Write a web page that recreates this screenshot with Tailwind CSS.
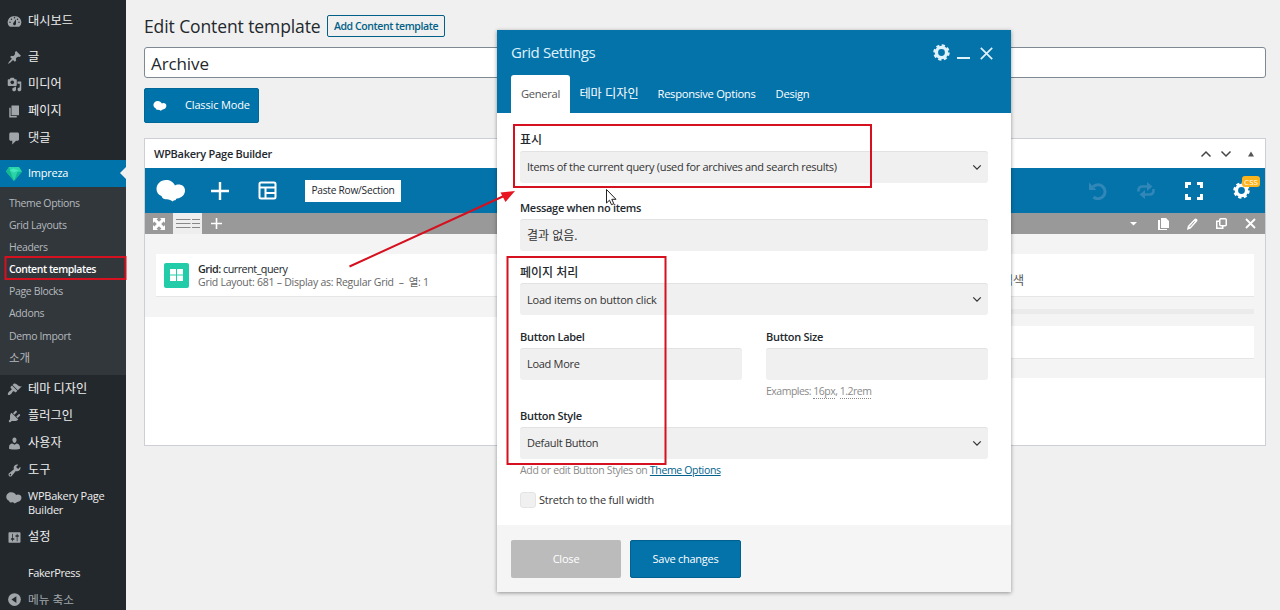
<!DOCTYPE html>
<html lang="ko">
<head>
    <meta charset="UTF-8">
    <meta name="viewport" content="width=device-width, initial-scale=1.0">
    <title>Edit Content template</title>
    <script src="https://cdn.jsdelivr.net/npm/@tailwindcss/browser@4"></script>
</head>
<body class="relative flex w-[1280px] h-[610px] overflow-hidden bg-[#f0f0f0] text-[#23282d] text-[11px] font-['Open_Sans','Noto_Sans_CJK_KR',sans-serif]">
    <!-- Shared icons -->
    <svg class="hidden">
        <symbol id="bakery" viewBox="0 0 30 22"><path d="M10 0C4.500 0 .5 4 .5 9c0 3.500 2.200 6 5 7 .8 3 3 3.500 5.500 3.200 2 .3 4 .8 5.500 2.300.8-.8 1.600-1.400 3.500-1.500-.5-1 .2-1.400 1-1.500C26 18 29 14.500 29 10.500 29 6.500 26 4.500 22.500 4.500c-1.500 0-2.600.4-3.500 1C17.500 2 14 0 10 0z"/></symbol>
        <symbol id="gear" viewBox="0 0 20 20"><circle cx="10" cy="10" r="6" fill="none" stroke="currentColor" stroke-width="4"/><circle cx="10" cy="10" r="8.400" fill="none" stroke="currentColor" stroke-width="2.600" stroke-dasharray="3.800 2.797"/></symbol>
        <symbol id="chevron" viewBox="0 0 12 8"><path d="M1.500 1.500 6 6l4.500-4.500" fill="none" stroke="currentColor" stroke-width="1.500"/></symbol>
    </svg>

    <!-- Admin menu -->
    <nav class="w-[126px] shrink-0 bg-[#23282d] text-[#eee] text-[12.2px] pt-[7px]">
        <a class="flex items-center h-[27px] pt-0.5 pl-[7px] mb-[9px]">
            <svg class="w-[15px] h-[15px] mr-1.5 fill-[#a0a5aa]" viewBox="0 0 20 20"><path d="M3.760 17h12.480A7.998 7.998 0 0 0 10 3a8 8 0 0 0-6.240 14zM10 4c.55 0 1 .45 1 1s-.45 1-1 1-1-.45-1-1 .45-1 1-1zM6 6c.55 0 1 .45 1 1s-.45 1-1 1-1-.45-1-1 .45-1 1-1zm8 0c.55 0 1 .45 1 1s-.45 1-1 1-1-.45-1-1 .45-1 1-1zm-5.370 5.550L12 7v6c0 1.100-.9 2-2 2s-2-.9-2-2c0-.57.24-1.080.63-1.450zM4 10c.55 0 1 .45 1 1s-.45 1-1 1-1-.45-1-1 .45-1 1-1zm12 0c.55 0 1 .45 1 1s-.45 1-1 1-1-.45-1-1 .45-1 1-1z"/></svg>
            대시보드
        </a>
        <a class="flex items-center h-[27px] pt-0.5 pl-[7px]">
            <svg class="w-[15px] h-[15px] mr-1.5 fill-[#a0a5aa]" viewBox="0 0 20 20"><path d="M10.440 3.020l1.820-1.820 6.360 6.350-1.830 1.820c-1.050-.68-2.480-.57-3.410.36l-.75.75c-.92.93-1.040 2.350-.35 3.410l-1.830 1.820-2.410-2.410-2.800 2.790c-.42.42-3.380 2.710-3.800 2.290s1.860-3.390 2.280-3.810l2.790-2.790L4.100 9.360l1.830-1.820c1.050.69 2.480.57 3.400-.36l.75-.75c.93-.92 1.050-2.350.36-3.410z"/></svg>
            글
        </a>
        <a class="flex items-center h-[27px] pt-0.5 pl-[7px]">
            <svg class="w-[15px] h-[15px] mr-1.5 fill-[#a0a5aa]" viewBox="0 0 20 20"><path d="M13 11V4c0-.55-.45-1-1-1h-1.670L9 1H5L3.670 3H2c-.55 0-1 .45-1 1v7c0 .55.45 1 1 1h10c.55 0 1-.45 1-1zM7 4.500c1.380 0 2.500 1.120 2.500 2.500S8.380 9.500 7 9.500 4.500 8.380 4.500 7 5.620 4.500 7 4.500zM14 6h5v10.500c0 1.380-1.120 2.500-2.500 2.500S14 17.880 14 16.500s1.120-2.500 2.500-2.500c.17 0 .34.02.5.05V9h-3V6zm-4 8.050V13h2v3.500c0 1.380-1.120 2.500-2.500 2.500S7 17.880 7 16.500 8.120 14 9.500 14c.17 0 .34.02.5.05z"/></svg>
            미디어
        </a>
        <a class="flex items-center h-[27px] pt-0.5 pl-[7px]">
            <svg class="w-[15px] h-[15px] mr-1.5 fill-[#a0a5aa]" viewBox="0 0 20 20"><path d="M6 15V2h10v13H6zm-1 1h8v2H3V5h2v11z"/></svg>
            페이지
        </a>
        <a class="flex items-center h-[27px] pt-0.5 pl-[7px] mb-[9px]">
            <svg class="w-[15px] h-[15px] mr-1.5 fill-[#a0a5aa]" viewBox="0 0 20 20"><path d="M5 2h9c1.100 0 2 .9 2 2v7c0 1.100-.9 2-2 2h-2l-5 5v-5H5c-1.100 0-2-.9-2-2V4c0-1.100.9-2 2-2z"/></svg>
            댓글
        </a>
        <a class="relative flex items-center h-[27px] pl-[6px] bg-[#0073aa] text-white text-[11px] tracking-[-0.25px]">
            <svg class="w-4 h-[15px] mr-1.5" viewBox="0 0 16 15"><path d="M3 1h10l3 4.500L8 15 0 5.500z" fill="#2bd4a8"/><path d="M0 5.500 8 15l-3.500-9L3 1z" fill="#13b98f"/><path d="M16 5.500 8 15l3.500-9z" fill="#0fb594"/><path d="m3.500 4.500 4-2 5 2-4.500 2z" fill="#45e6bd"/></svg>
            Impreza
            <span class="absolute right-0 top-[7px] border-y-[6px] border-r-[6px] border-y-transparent border-r-[#f0f0f0]"></span>
        </a>
        <div class="h-[188px] pt-[5px] pl-[9px] bg-[#32373c] text-[#b4b9be] text-[10.5px] leading-[22.1px] tracking-[-0.35px]">
            <p>Theme Options</p>
            <p>Grid Layouts</p>
            <p>Headers</p>
            <p class="font-semibold text-white tracking-[-0.45px]">Content templates</p>
            <p>Page Blocks</p>
            <p>Addons</p>
            <p>Demo Import</p>
            <p class="text-[11.5px] tracking-normal">소개</p>
        </div>
        <a class="flex items-center h-[27px] pt-0.5 pl-[7px]">
            <svg class="w-[15px] h-[15px] mr-1.5 fill-[#a0a5aa]" viewBox="0 0 20 20"><path d="M14.480 11.060L7.410 3.990l1.500-1.500c.5-.56 2.300-.47 3.510.32 1.210.8 1.430 1.280 2.910 2.100 1.180.64 2.450 1.260 4.450.85zm-.71.71L6.700 4.700 4.930 6.470c-.39.39-.39 1.020 0 1.410l1.060 1.060c.39.39.39 1.030 0 1.420-.6.6-1.430 1.110-2.210 1.690-.35.26-.7.53-1.010.84C1.430 14.230.4 16.080 1.400 17.070c.99 1 2.840-.03 4.180-1.360.31-.31.58-.66.85-1.020.57-.78 1.080-1.610 1.690-2.210.39-.39 1.020-.39 1.410 0l1.060 1.060c.39.39 1.020.39 1.410 0z"/></svg>
            테마 디자인
        </a>
        <a class="flex items-center h-[27px] pt-0.5 pl-[7px]">
            <svg class="w-[15px] h-[15px] mr-1.5 fill-[#a0a5aa]" viewBox="0 0 20 20"><path d="M13.110 4.360L9.870 7.600 8 5.730l3.240-3.240c.35-.34 1.050-.2 1.560.32.52.51.66 1.210.31 1.550zm-8 1.770l.91-1.120 9.010 9.010-1.190.84c-.71.71-2.630 1.160-3.820 1.160H6.140L4.900 17.260c-.59.59-1.540.59-2.120 0-.59-.58-.59-1.530 0-2.120l1.240-1.240v-3.880c0-1.130.4-3.190 1.090-3.890zm7.260 3.970l3.240-3.240c.34-.35 1.040-.21 1.550.31.52.51.66 1.210.31 1.550l-3.240 3.250z"/></svg>
            플러그인
        </a>
        <a class="flex items-center h-[27px] pt-0.5 pl-[7px]">
            <svg class="w-[15px] h-[15px] mr-1.5 fill-[#a0a5aa]" viewBox="0 0 20 20"><path d="M10 9.250c-2.270 0-2.730-3.440-2.730-3.440C7 4.020 7.820 2 9.970 2c2.160 0 2.980 2.020 2.710 3.810 0 0-.41 3.440-2.680 3.440zm0 2.570L12.720 10c2.390 0 4.520 2.330 4.520 4.530v2.490s-3.650 1.130-7.240 1.130c-3.650 0-7.240-1.130-7.240-1.130v-2.490c0-2.250 1.940-4.480 4.470-4.480z"/></svg>
            사용자
        </a>
        <a class="flex items-center h-[27px] pt-0.5 pl-[7px]">
            <svg class="w-[15px] h-[15px] mr-1.5 fill-[#a0a5aa]" viewBox="0 0 20 20"><path d="M16.680 9.770c-1.340 1.340-3.300 1.670-4.950.99l-5.410 6.520c-.99.99-2.590.99-3.580 0s-.99-2.590 0-3.570l6.520-5.420c-.68-1.650-.35-3.610.99-4.950 1.280-1.280 3.120-1.620 4.720-1.060l-2.890 2.890 2.820 2.820 2.860-2.870c.53 1.580.18 3.390-1.080 4.650zM3.810 16.210c.4.39 1.040.39 1.430 0 .4-.4.4-1.040 0-1.430-.39-.4-1.030-.4-1.430 0-.39.39-.39 1.030 0 1.430z"/></svg>
            도구
        </a>
        <a class="flex h-10 pl-[6px] pt-1.5 text-[11px] leading-[14px] tracking-[-0.25px]">
            <svg class="w-4 h-3 mt-[3px] mr-1.5 shrink-0 fill-[#a0a5aa]"><use href="#bakery"/></svg>
            <span>WPBakery Page<br>Builder</span>
        </a>
        <a class="flex items-center h-[27px] pt-0.5 pl-[7px] mb-[9px]">
            <svg class="w-[15px] h-[15px] mr-1.5 fill-[#a0a5aa]" viewBox="0 0 20 20"><path d="M18 16V4c0-.55-.45-1-1-1H3c-.55 0-1 .45-1 1v12c0 .55.45 1 1 1h14c.55 0 1-.45 1-1zM8 11h1c.55 0 1 .45 1 1s-.45 1-1 1H8v1.500c0 .28-.22.5-.5.5s-.5-.22-.5-.5V13H6c-.55 0-1-.45-1-1s.45-1 1-1h1V5.500c0-.28.22-.5.5-.5s.5.22.5.5V11zm5-2h-1c-.55 0-1-.45-1-1s.45-1 1-1h1V5.500c0-.28.22-.5.5-.5s.5.22.5.5V7h1c.55 0 1 .45 1 1s-.45 1-1 1h-1v5.500c0 .28-.22.5-.5.5s-.5-.22-.5-.5V9z"/></svg>
            설정
        </a>
        <a class="flex items-center h-[27px] pt-0.5 pl-7 text-[11px] tracking-[-0.4px]">FakerPress</a>
        <a class="flex items-center h-[27px] pl-[7px] text-[#a0a5aa] text-[11.7px]">
            <svg class="w-[15px] h-[15px] mr-1.5" viewBox="0 0 20 20"><circle cx="10" cy="10" r="8.500" fill="#a0a5aa"/><path d="M12.500 5.500v9L6 10z" fill="#23282d"/></svg>
            메뉴 축소
        </a>
    </nav>

    <!-- Editor -->
    <main class="flex-1 pl-[18px] pr-[14px] pt-[15px]">
        <div class="flex items-center h-[21px]">
            <h1 class="w-[183px] pt-0.5 text-[17.5px] tracking-[-0.1px] whitespace-nowrap">Edit Content template</h1>
            <a class="flex items-center justify-center w-[118px] h-[22px] pt-0.5 border border-[#016087] rounded-xs text-[#016087] text-[10.5px] font-semibold tracking-[-0.4px] whitespace-nowrap">Add Content template</a>
        </div>
        <div class="flex items-center mt-[11px] h-[31px] pl-1.5 pt-0.5 border border-[#7e8993] rounded-[3px] bg-white text-[17px] tracking-[-0.1px]">Archive</div>
        <a class="flex items-center mt-2.5 w-[115px] h-[35px] pl-2 rounded-xs border border-[#006799] bg-[#0073aa] text-white text-[11px] tracking-[-0.15px]">
            <svg class="w-[14px] h-[10px] mr-[18px] fill-white"><use href="#bakery"/></svg>
            Classic Mode
        </a>
        <section class="mt-[15px] h-[308px] border border-[#ccd0d4] bg-white">
            <div class="flex items-center h-[29px] pl-[9px] pr-[9px]">
                <h2 class="flex-1 pt-px font-semibold text-[11px] tracking-[-0.27px]">WPBakery Page Builder</h2>
                <svg class="w-3 h-2 rotate-180 text-[#444]"><use href="#chevron"/></svg>
                <svg class="w-3 h-2 ml-2 text-[#444]"><use href="#chevron"/></svg>
                <svg class="w-2 h-1.5 ml-[15px] mr-px fill-[#555]" viewBox="0 0 8 6"><path d="M4 .5 7 5.500H1z"/></svg>
            </div>
            <div class="flex items-center h-[45px] pl-[11px] pr-[14px] bg-[#0473aa] text-white">
                <svg class="w-[30px] h-[22px] mr-[25px] fill-white"><use href="#bakery"/></svg>
                <svg class="w-[18px] h-[18px] mr-[29px]" viewBox="0 0 18 18"><path d="M9 0v18M0 9h18" stroke="#fff" stroke-width="2.400"/></svg>
                <svg class="w-[19px] h-[19px] mr-[28px]" viewBox="0 0 19 19" fill="none" stroke="#fff" stroke-width="2"><rect x="1.500" y="1.500" width="16" height="16" rx="1.500"/><path d="M1.500 6.500h16M7.500 6.500v11M7.500 12h10" /></svg>
                <span class="flex items-center justify-center w-24 h-[22px] bg-white text-[#23282d] text-[10.2px] tracking-[-0.25px] whitespace-nowrap">Paste Row/Section</span>
                <div class="relative flex items-center ml-auto">
                    <svg class="w-[18px] h-[18px] mr-[30px]" viewBox="0 0 18 18" fill="none" stroke="#3187b8" stroke-width="3"><path d="M4 4.800A7 7 0 1 1 4.500 15"/><path d="M0 .5v7.500h7.500z" fill="#3187b8" stroke="none"/></svg>
                    <svg class="w-[18px] h-[17px] mr-[30px]" viewBox="0 0 18 17" fill="none" stroke="#3187b8" stroke-width="2.600"><path d="M1.500 9.500V8A3.500 3.500 0 0 1 5 4.500h6M16.500 7v2A3.500 3.500 0 0 1 13 12.500H7"/><path d="M10 0v9l5.500-4.500zM8 8v9l-5.500-4.500z" fill="#3187b8" stroke="none"/></svg>
                    <svg class="w-[18px] h-[18px] mr-[30px]" viewBox="0 0 18 18" fill="none" stroke="#fff" stroke-width="3"><path d="M1.500 6V1.500H6M12 1.500h4.500V6M16.500 12v4.500H12M6 16.500H1.500V12"/></svg>
                    <svg class="w-[17px] h-[17px] mr-px"><use href="#gear"/></svg>
                    <span class="absolute right-[-9px] top-[-6px] w-[18px] h-[11px] rounded-[3px] bg-[#fcb41d] text-[8px] leading-[11px] text-center">CSS</span>
                </div>
            </div>
            <div class="flex items-center h-[21px] pl-2 pr-[9px] bg-[#999]">
                <svg class="w-3 h-3 mr-2" viewBox="0 0 12 12" fill="#fff"><path d="M0 0h5L3.600 1.400 6 3.800l2.400-2.400L7 0h5v5l-1.400-1.400L8.200 6l2.400 2.400L12 7v5H7l1.400-1.400L6 8.200l-2.400 2.400L5 12H0V7l1.400 1.400L3.800 6 1.400 3.600 0 5z"/></svg>
                <span class="flex items-center justify-center w-[29px] h-[21px] bg-[#eee]">
                    <svg class="w-6 h-[11px]" viewBox="0 0 24 11" stroke="#888"><path d="M0 1.500h14.500M16 1.500h8M0 5.500h14.500M16 5.500h8M0 9.500h14.500M16 9.500h8"/></svg>
                </span>
                <svg class="w-[11px] h-[11px] ml-[9px]" viewBox="0 0 11 11"><path d="M5.500 0v11M0 5.500h11" stroke="#fff" stroke-width="1.600"/></svg>
                <svg class="w-[7px] h-1 ml-auto mr-[21px]" viewBox="0 0 7 4" fill="#fff"><path d="M0 0h7L3.500 3.500z"/></svg>
                <svg class="w-[11px] h-3 mr-[18px]" viewBox="0 0 11 12" fill="#fff"><path d="M3 0h5l3 3v7H3zM0 2h2v9h7v1H0z"/></svg>
                <svg class="w-[11px] h-3 mr-[18px]" viewBox="0 0 11 12"><path d="m0 12 .8-4L7.500.9c.8-.8 1.500-.6 2.300.1s1 1.600.2 2.400L3.700 10.500z" fill="#fff"/><path d="m2.600 9 5-5.600" stroke="#999"/></svg>
                <svg class="w-[11px] h-[11px] mr-[18px]" viewBox="0 0 11 11" fill="none" stroke="#fff" stroke-width="1.500"><rect x="3.750" y=".75" width="6.500" height="7" rx="1"/><path d="M3.500 3.250H.75v7h6V8"/></svg>
                <svg class="w-[11px] h-[11px]" viewBox="0 0 11 11"><path d="m1 1 9 9m0-9-9 9" stroke="#fff" stroke-width="1.800"/></svg>
            </div>
            <div class="flex items-start">
                <div class="w-[680px] h-[83px] pt-5 pl-[11px] pr-[11px] bg-[#f4f4f4]">
                    <div class="flex items-center h-[43px] pl-[8px] bg-white border-b border-[#e6e6e6]">
                        <span class="flex items-center justify-center w-[25px] h-[25px] mr-[9px] rounded-xs bg-[#23cca8]">
                            <svg class="w-[13px] h-3" viewBox="0 0 13 12" fill="#fff"><path d="M0 0h6v5.500H0zM7 0h6v5.500H7zM0 6.500h6V12H0zM7 6.500h6V12H7z"/></svg>
                        </span>
                        <div class="text-[10.8px] leading-[13px]">
                            <p class="tracking-[-0.5px]"><span class="font-semibold">Grid:</span> current_query</p>
                            <p class="pt-px text-[#666] text-[10.5px] tracking-[-0.25px]">Grid Layout: 681 – Display as: Regular Grid &nbsp;– &nbsp;열: 1</p>
                        </div>
                    </div>
                </div>
                <div class="flex-1 h-[144px] pt-5 pl-[11px] pr-[11px] bg-[#f4f4f4]">
                    <div class="h-[43px] pt-5 pl-[166px] bg-white border-b border-[#e6e6e6] text-[#555] text-[12px] leading-[13px]">검색</div>
                    <div class="h-[5px] my-3 bg-[#ebebeb]"></div>
                    <div class="h-[33px] bg-white border-b border-[#e6e6e6]"></div>
                </div>
            </div>
        </section>
    </main>

    <!-- Grid settings window -->
    <div class="absolute left-[497px] top-[30px] flex flex-col w-[514px] h-[562px] bg-white shadow-[0_1px_4px_rgba(0,0,0,0.4)] tracking-[-0.29px]">
        <header class="h-[83px] px-[14px] bg-[#0473aa] text-white">
            <div class="flex items-center h-[45px] text-[#dff1fa]">
                <h3 class="flex-1 text-[15px] tracking-[-0.4px]">Grid Settings</h3>
                <svg class="w-[17px] h-[17px]"><use href="#gear"/></svg>
                <span class="w-[13px] h-0.5 ml-[7px] mr-[10px] mt-[11px] bg-[#dff1fa]"></span>
                <svg class="w-[13px] h-[13px] mt-px mr-1" viewBox="0 0 13 13"><path d="m.8.8 11.400 11.400m0-11.400L.8 12.200" stroke="#dff1fa" stroke-width="1.700"/></svg>
            </div>
            <div class="flex h-[38px] text-[11.200px] leading-[38px] whitespace-nowrap">
                <span class="w-[59px] rounded-t-[3px] bg-white text-[#555] text-center">General</span>
                <span class="w-[78px] text-center text-[12.2px] tracking-normal">테마 디자인</span>
                <span class="w-[117px] text-center">Responsive Options</span>
                <span class="w-[55px] text-center">Design</span>
            </div>
        </header>
        <div class="flex-1 px-[23px] pt-[18px]">
            <label class="block h-4 leading-[18px] font-medium text-[12px] tracking-normal">표시</label>
            <div class="flex items-center h-8 mt-[4px] px-[7px] rounded-[3px] border-t border-[#e2e2e2] bg-[#f0f0f0] text-[#333] text-[11px]">
                <span class="flex-1">Items of the current query (used for archives and search results)</span>
                <svg class="w-[10px] h-[7px] -mr-px"><use href="#chevron"/></svg>
            </div>

            <label class="block h-4 mt-[17px] leading-4 font-semibold text-[11px]">Message when no items</label>
            <div class="flex items-center h-8 mt-[3px] px-[7px] rounded-[3px] border-t border-[#e2e2e2] bg-[#f0f0f0] text-[#333] text-[12px] tracking-normal">결과 없음.</div>

            <label class="block h-4 mt-[13px] leading-[18px] font-medium text-[12px] tracking-normal">페이지 처리</label>
            <div class="flex items-center h-8 mt-[3px] px-[7px] rounded-[3px] border-t border-[#e2e2e2] bg-[#f0f0f0] text-[#333] text-[11px] tracking-[-0.2px]">
                <span class="flex-1 pt-px">Load items on button click</span>
                <svg class="w-[10px] h-[7px] -mr-px"><use href="#chevron"/></svg>
            </div>

            <div class="grid grid-cols-2 gap-6 h-[79px] mt-[14px]">
                <div>
                    <label class="block h-4 leading-4 font-semibold text-[11px]">Button Label</label>
                    <div class="flex items-center h-8 mt-[3px] px-[7px] rounded-[3px] border-t border-[#e2e2e2] bg-[#f0f0f0] text-[#333] text-[11px]">Load More</div>
                </div>
                <div>
                    <label class="block h-4 leading-4 font-semibold text-[11px]">Button Size</label>
                    <div class="h-8 mt-[3px] rounded-[3px] border-t border-[#e2e2e2] bg-[#f0f0f0]"></div>
                    <p class="mt-[5px] text-[#8a8a8a] text-[10.5px] leading-[13px] tracking-[-0.5px]">Examples: <span class="inline-block border-b border-dotted border-[#888]">16px</span>, <span class="inline-block border-b border-dotted border-[#888]">1.2rem</span></p>
                </div>
            </div>

            <label class="block h-4 leading-4 font-semibold text-[11px]">Button Style</label>
            <div class="flex items-center h-8 mt-[3px] px-[7px] rounded-[3px] border-t border-[#e2e2e2] bg-[#f0f0f0] text-[#333] text-[11px]">
                <span class="flex-1">Default Button</span>
                <svg class="w-[10px] h-[7px] -mr-px"><use href="#chevron"/></svg>
            </div>
            <p class="h-4 mt-[3px] leading-4 text-[#8a8a8a] text-[10.5px] tracking-[-0.34px]">Add or edit Button Styles on <a class="text-[#00628c] underline">Theme Options</a></p>
            <div class="flex items-center h-4 mt-[14px] text-[#333] text-[11px] tracking-[-0.2px]">
                <span class="w-4 h-4 mr-[3px] rounded-[3px] border border-[#e4e4e4] bg-[#f0f0f0]"></span>
                Stretch to the full width
            </div>
        </div>
        <footer class="flex gap-[9px] h-[67px] pt-[15px] pl-[14px] bg-[#f5f5f5] text-white text-[11px]">
            <button class="w-[110px] h-[38px] rounded-xs bg-[#bbb] tracking-[-0.2px]">Close</button>
            <button class="w-[111px] h-[38px] rounded-xs border border-[#00608f] bg-[#0473aa] tracking-[-0.25px]">Save changes</button>
        </footer>
    </div>

    <!-- Annotations -->
    <svg class="absolute inset-0 w-[1280px] h-[610px]" viewBox="0 0 1280 610" fill="none" stroke="#d5101f" stroke-width="2">
        <rect x="5.500" y="257" width="120" height="22"/>
        <rect x="514" y="125" width="357" height="62"/>
        <rect x="507.500" y="257" width="158" height="207"/>
        <path d="M349.500 266.500 505 195.500"/>
        <path d="M515 191l-14.500 1.500 5 9.500z" fill="#e8141f" stroke="none"/>
        <path d="M606.500 189.500v13.500l3-2.800 2 4.500 2.300-1-2-4.400h4.200z" fill="#fff" stroke="#222" stroke-width="1"/>
    </svg>
</body>
</html>
